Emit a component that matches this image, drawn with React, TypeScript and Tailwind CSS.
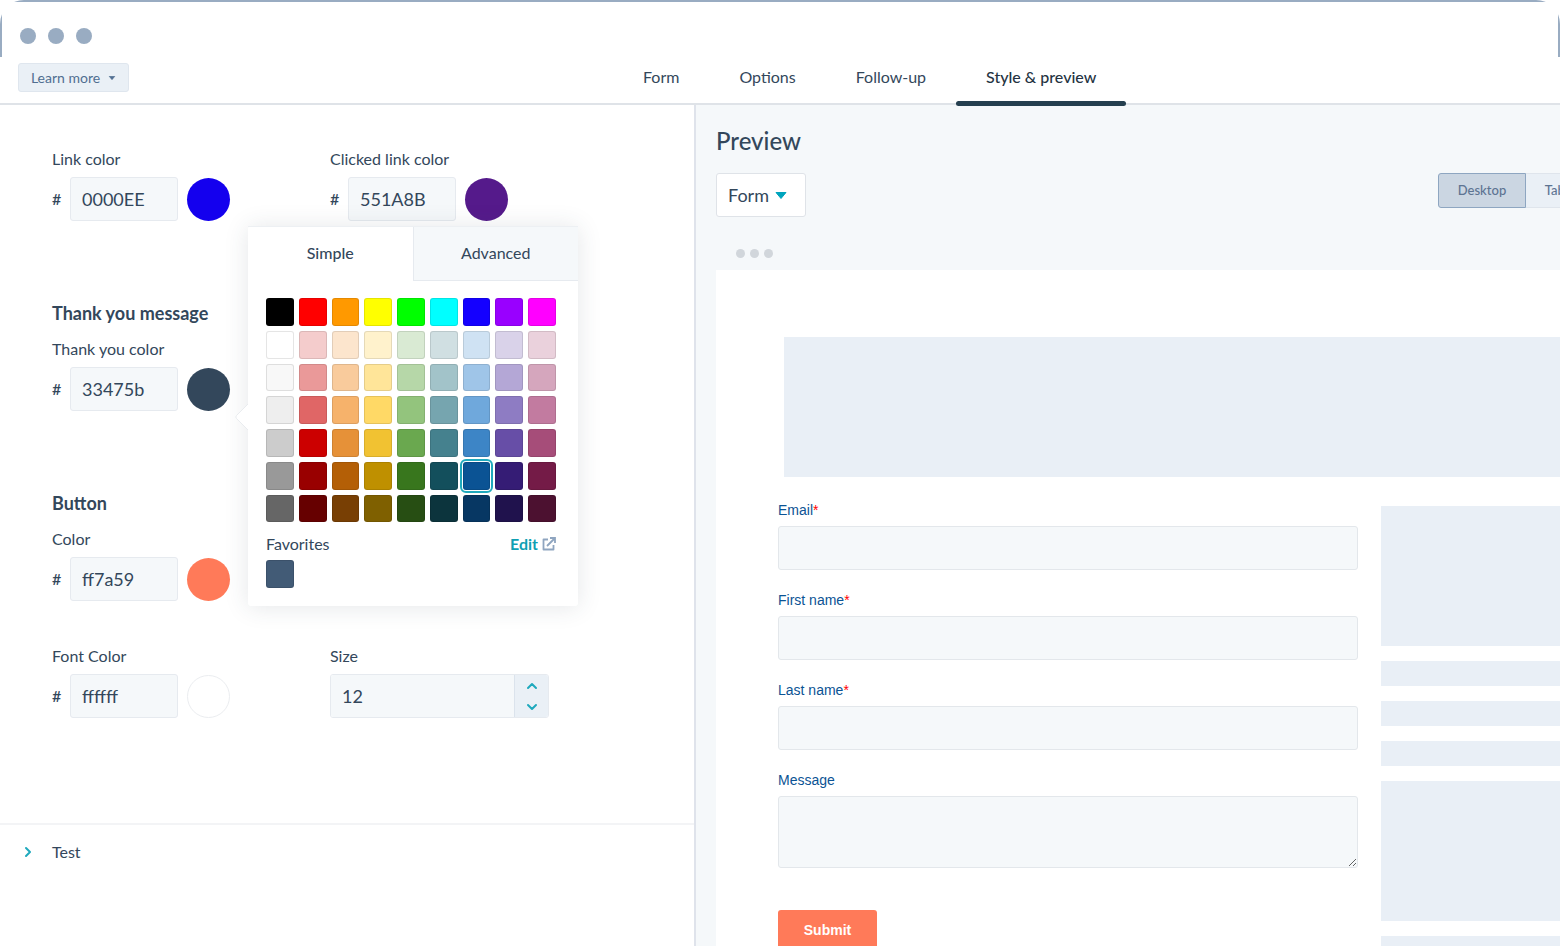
import { ChevronDown, ChevronRight, ChevronUp } from "lucide-react";

const palette = [
  ["#000000", "#ff0000", "#ff9900", "#ffff00", "#00ff00", "#00ffff", "#1400ff", "#9900ff", "#ff00ff"],
  ["#ffffff", "#f4cccc", "#fce5cd", "#fff2cc", "#d9ead3", "#d0dfe2", "#cfe2f3", "#d9d2e9", "#ead1dc"],
  ["#f8f8f8", "#ea9999", "#f9cb9c", "#ffe599", "#b6d7a8", "#a2c3c9", "#9fc5e8", "#b4a7d6", "#d5a6bd"],
  ["#eeeeee", "#e06666", "#f6b26b", "#ffd966", "#93c47d", "#76a5af", "#6fa8dc", "#8e7cc3", "#c27ba0"],
  ["#cccccc", "#cc0000", "#e69138", "#f1c232", "#6aa84f", "#45818e", "#3d85c6", "#674ea7", "#a64d79"],
  ["#999999", "#990000", "#b45f06", "#bf9000", "#38761d", "#134f5c", "#0b5394", "#351c75", "#741b47"],
  ["#666666", "#660000", "#783f04", "#7f6000", "#274e13", "#0c343d", "#073763", "#20124d", "#4c1130"],
];

const selected = "#0b5394";

const tabs = ["Form", "Options", "Follow-up", "Style & preview"];

function Caret({ className }: { className: string }) {
  return (
    <svg viewBox="0 0 12 7" className={className} aria-hidden="true">
      <path d="M1 0.5h10L6 6.5z" fill="currentColor" stroke="currentColor" strokeLinejoin="round" />
    </svg>
  );
}

function ColorField({ id, label, value, color }: { id: string; label: string; value: string; color: string }) {
  return (
    <div className="w-[278px]">
      <label htmlFor={id} className="block text-base leading-5">
        {label}
      </label>
      <div className="mt-2 flex items-center">
        <span className="w-[18px] text-base font-medium">#</span>
        <input
          id={id}
          defaultValue={value}
          className="h-11 w-[108px] rounded-[3px] border border-[#e6eaef] bg-[#f5f8fa] px-[11px] text-lg outline-none"
        />
        <button
          type="button"
          aria-label={`Pick ${label}`}
          className={`ml-[9px] size-[43px] rounded-full ${color === "#ffffff" ? "border border-[#ebedf0]" : ""}`}
          style={{ backgroundColor: color }}
        />
      </div>
    </div>
  );
}

function Swatch({ color }: { color: string }) {
  return (
    <button
      type="button"
      aria-label={color}
      className={`block aspect-square w-full rounded-[3px] border border-black/10 ${
        color === selected ? "outline-2 outline-offset-1 outline-[#1fa9bd]" : ""
      }`}
      style={{ backgroundColor: color }}
    />
  );
}

function ColorPicker() {
  return (
    <div className="absolute left-[248px] top-[121px] z-10 w-[330px] rounded-[3px] bg-white shadow-[0_1px_24px_rgba(45,62,80,0.13)]">
      {/* Arrow that points at the active color */}
      <svg viewBox="0 0 14 28" className="absolute -left-[13px] top-[177px] h-7 w-[14px]" aria-hidden="true">
        <path d="M14 0 L1.500 12.500 Q0 14 1.500 15.500 L14 28z" fill="#fff" />
        <path d="M13 1 L1.500 12.500 Q0 14 1.500 15.500 L13 27" fill="none" stroke="#e9ecef" />
      </svg>

      <div className="flex h-[55px] border-t border-[#edf0f3] text-base">
        <button type="button" className="flex-1 pb-[2px] font-medium">
          Simple
        </button>
        <button type="button" className="flex-1 border-b border-l border-[#e6eaef] bg-[#f5f8fa] pb-[2px]">
          Advanced
        </button>
      </div>

      <div className="pb-[18px] pl-[18px] pr-[22px] pt-[17px]">
        <div className="grid grid-cols-9 gap-[5px]">
          {palette.flat().map((color) => (
            <Swatch key={color} color={color} />
          ))}
        </div>
        <div className="mt-3 flex items-center justify-between leading-5">
          <span>Favorites</span>
          <a href="#edit" className="flex items-center gap-1 font-bold text-[#0f9fb3]">
            Edit
            <svg viewBox="0 0 14 14" className="size-[14px] text-[#8fa5c0]" fill="none" stroke="currentColor" strokeWidth="1.800" aria-hidden="true">
              <path d="M6 2.500H1.500V12.500H11.500V8" strokeLinejoin="round" />
              <path d="M5 9L12.500 1.500M8 1H13V6" />
            </svg>
          </a>
        </div>
        <div className="mt-[6px] w-7">
          <Swatch color="#425b76" />
        </div>
      </div>
    </div>
  );
}

function StylePanel() {
  return (
    <section className="relative w-[696px] shrink-0 border-r-2 border-[#dfe3eb] pt-11">
      <div className="px-[52px]">
        <div className="flex">
          <ColorField id="link" label="Link color" value="0000EE" color="#1400ee" />
          <ColorField id="clicked" label="Clicked link color" value="551A8B" color="#551a8b" />
        </div>

        <h2 className="mt-20 text-lg font-bold leading-6">Thank you message</h2>
        <div className="mt-[14px]">
          <ColorField id="thanks" label="Thank you color" value="33475b" color="#33475b" />
        </div>

        <h2 className="mt-20 text-lg font-bold leading-6">Button</h2>
        <div className="mt-[14px]">
          <ColorField id="button" label="Color" value="ff7a59" color="#ff7a59" />
        </div>

        <div className="mt-[45px] flex">
          <ColorField id="font" label="Font Color" value="ffffff" color="#ffffff" />
          <div className="w-[219px]">
            <label htmlFor="size" className="block text-base leading-5">
              Size
            </label>
            <div className="mt-2 flex h-11 overflow-hidden rounded-[3px] border border-[#e6eaef]">
              <input id="size" defaultValue="12" className="min-w-0 flex-1 bg-[#f5f8fa] px-[11px] text-lg outline-none" />
              <div className="flex w-[34px] flex-col border-l border-[#dbe3ec] bg-[#eaf0f6] text-[#1fa9bd]">
                <button type="button" aria-label="Increase" className="flex flex-1 items-center justify-center">
                  <ChevronUp className="size-4" strokeWidth={3} />
                </button>
                <button type="button" aria-label="Decrease" className="flex flex-1 items-center justify-center">
                  <ChevronDown className="size-4" strokeWidth={3} />
                </button>
              </div>
            </div>
          </div>
        </div>
      </div>

      <button type="button" className="mt-[105px] flex w-full items-center border-t-2 border-[#f3f4f6] pl-5 pt-[17px] text-base leading-5">
        <ChevronRight className="size-4 text-[#1fa9bd]" strokeWidth={3} />
        <span className="ml-4">Test</span>
      </button>

      <ColorPicker />
    </section>
  );
}

function FormField({ id, label, required }: { id: string; label: string; required?: boolean }) {
  const box = "mt-[6px] block w-full rounded-[3px] border border-[#e3e7eb] bg-[#f5f8fa] outline-none";
  return (
    <div>
      <label htmlFor={id} className="block text-sm leading-5 text-[#0b5394]">
        {label}
        {required && <span className="text-[#ff0000]">*</span>}
      </label>
      {required ? <input id={id} className={`${box} h-11`} /> : <textarea id={id} className={`${box} h-[72px]`} />}
    </div>
  );
}

function PreviewPanel() {
  return (
    <section className="flex min-w-0 flex-1 flex-col bg-[#f5f8fa] pl-5 pt-5">
      <h1 className="text-2xl font-medium leading-8">Preview</h1>
      <div className="mt-4 flex items-start justify-between">
        <button
          type="button"
          className="flex h-11 w-[90px] items-center gap-[6px] rounded-[3px] border border-[#dfe3e8] bg-white pl-[11px] text-lg"
        >
          Form
          <Caret className="h-[7px] w-3 text-[#00a4bd]" />
        </button>
        <div className="flex w-[122px] overflow-hidden text-[13px] font-medium text-[#5d7492]">
          <button type="button" className="h-[35px] w-[88px] shrink-0 rounded-l-[3px] border border-[#8ea6c1] bg-[#cbd6e2]">
            Desktop
          </button>
          <button type="button" className="h-[35px] w-[72px] shrink-0 border-y border-[#dfe5ec] bg-[#eaf0f6]">
            Tablet
          </button>
        </div>
      </div>

      <div className="mt-[19px] flex h-[34px] shrink-0 items-center gap-[5px] pl-5">
        <span className="size-[9px] rounded-full bg-[#d1d6db]" />
        <span className="size-[9px] rounded-full bg-[#d1d6db]" />
        <span className="size-[9px] rounded-full bg-[#d1d6db]" />
      </div>

      <div className="flex-1 bg-white pl-[62px] pt-[67px]">
        <div className="ml-[6px] h-[140px] bg-[#e9eff6]" />
        <div className="mt-[23px] flex gap-[23px] font-['Liberation_Sans',Arial,sans-serif]">
          <form className="flex flex-1 flex-col gap-5">
            <FormField id="email" label="Email" required />
            <FormField id="first" label="First name" required />
            <FormField id="last" label="Last name" required />
            <FormField id="message" label="Message" />
            <button type="button" className="mt-[22px] h-10 w-[99px] rounded-[3px] bg-[#ff7a59] text-sm font-bold text-white">
              Submit
            </button>
          </form>
          <div className="flex w-[179px] flex-col gap-[15px] pt-[6px]">
            <div className="h-[140px] bg-[#e9eff6]" />
            <div className="h-[25px] bg-[#e9eff6]" />
            <div className="h-[25px] bg-[#e9eff6]" />
            <div className="h-[25px] bg-[#e9eff6]" />
            <div className="h-[140px] bg-[#e9eff6]" />
            <div className="h-[25px] bg-[#e9eff6]" />
          </div>
        </div>
      </div>
    </section>
  );
}

export default function App() {
  return (
    <div className="flex h-screen flex-col overflow-hidden bg-white font-[Lato,sans-serif] text-[#33475b]">
      <div className="shrink-0 overflow-hidden rounded-t-[24px]">
        <div className="flex h-[57px] items-center gap-3 border-x-2 border-t-2 border-[#99acc2] pl-[18px] pt-[13px]">
          <span className="size-4 rounded-full bg-[#99acc2]" />
          <span className="size-4 rounded-full bg-[#99acc2]" />
          <span className="size-4 rounded-full bg-[#99acc2]" />
        </div>
      </div>

      <header className="flex h-12 shrink-0 items-stretch border-b-2 border-[#dfe3e8]">
        <div className="w-[613px] shrink-0 pl-[18px] pt-[6px]">
          <button
            type="button"
            className="flex h-[29px] w-[111px] items-center justify-center gap-2 rounded-[3px] border border-[#dfe6ee] bg-[#eaf0f6] text-sm text-[#506e91]"
          >
            Learn more
            <Caret className="h-1 w-2" />
          </button>
        </div>
        <nav className="flex">
          {tabs.map((tab) => (
            <a
              key={tab}
              href="#tab"
              className={`relative px-[30px] pt-[10px] text-base leading-5 ${
                tab === "Style & preview" ? "font-medium text-[#253342]" : ""
              }`}
            >
              {tab}
              {tab === "Style & preview" && (
                <span className="absolute inset-x-0 -bottom-[3px] z-10 h-[5px] rounded-sm bg-[#253f4f]" />
              )}
            </a>
          ))}
        </nav>
      </header>

      <main className="flex min-h-0 flex-1">
        <StylePanel />
        <PreviewPanel />
      </main>
    </div>
  );
}
